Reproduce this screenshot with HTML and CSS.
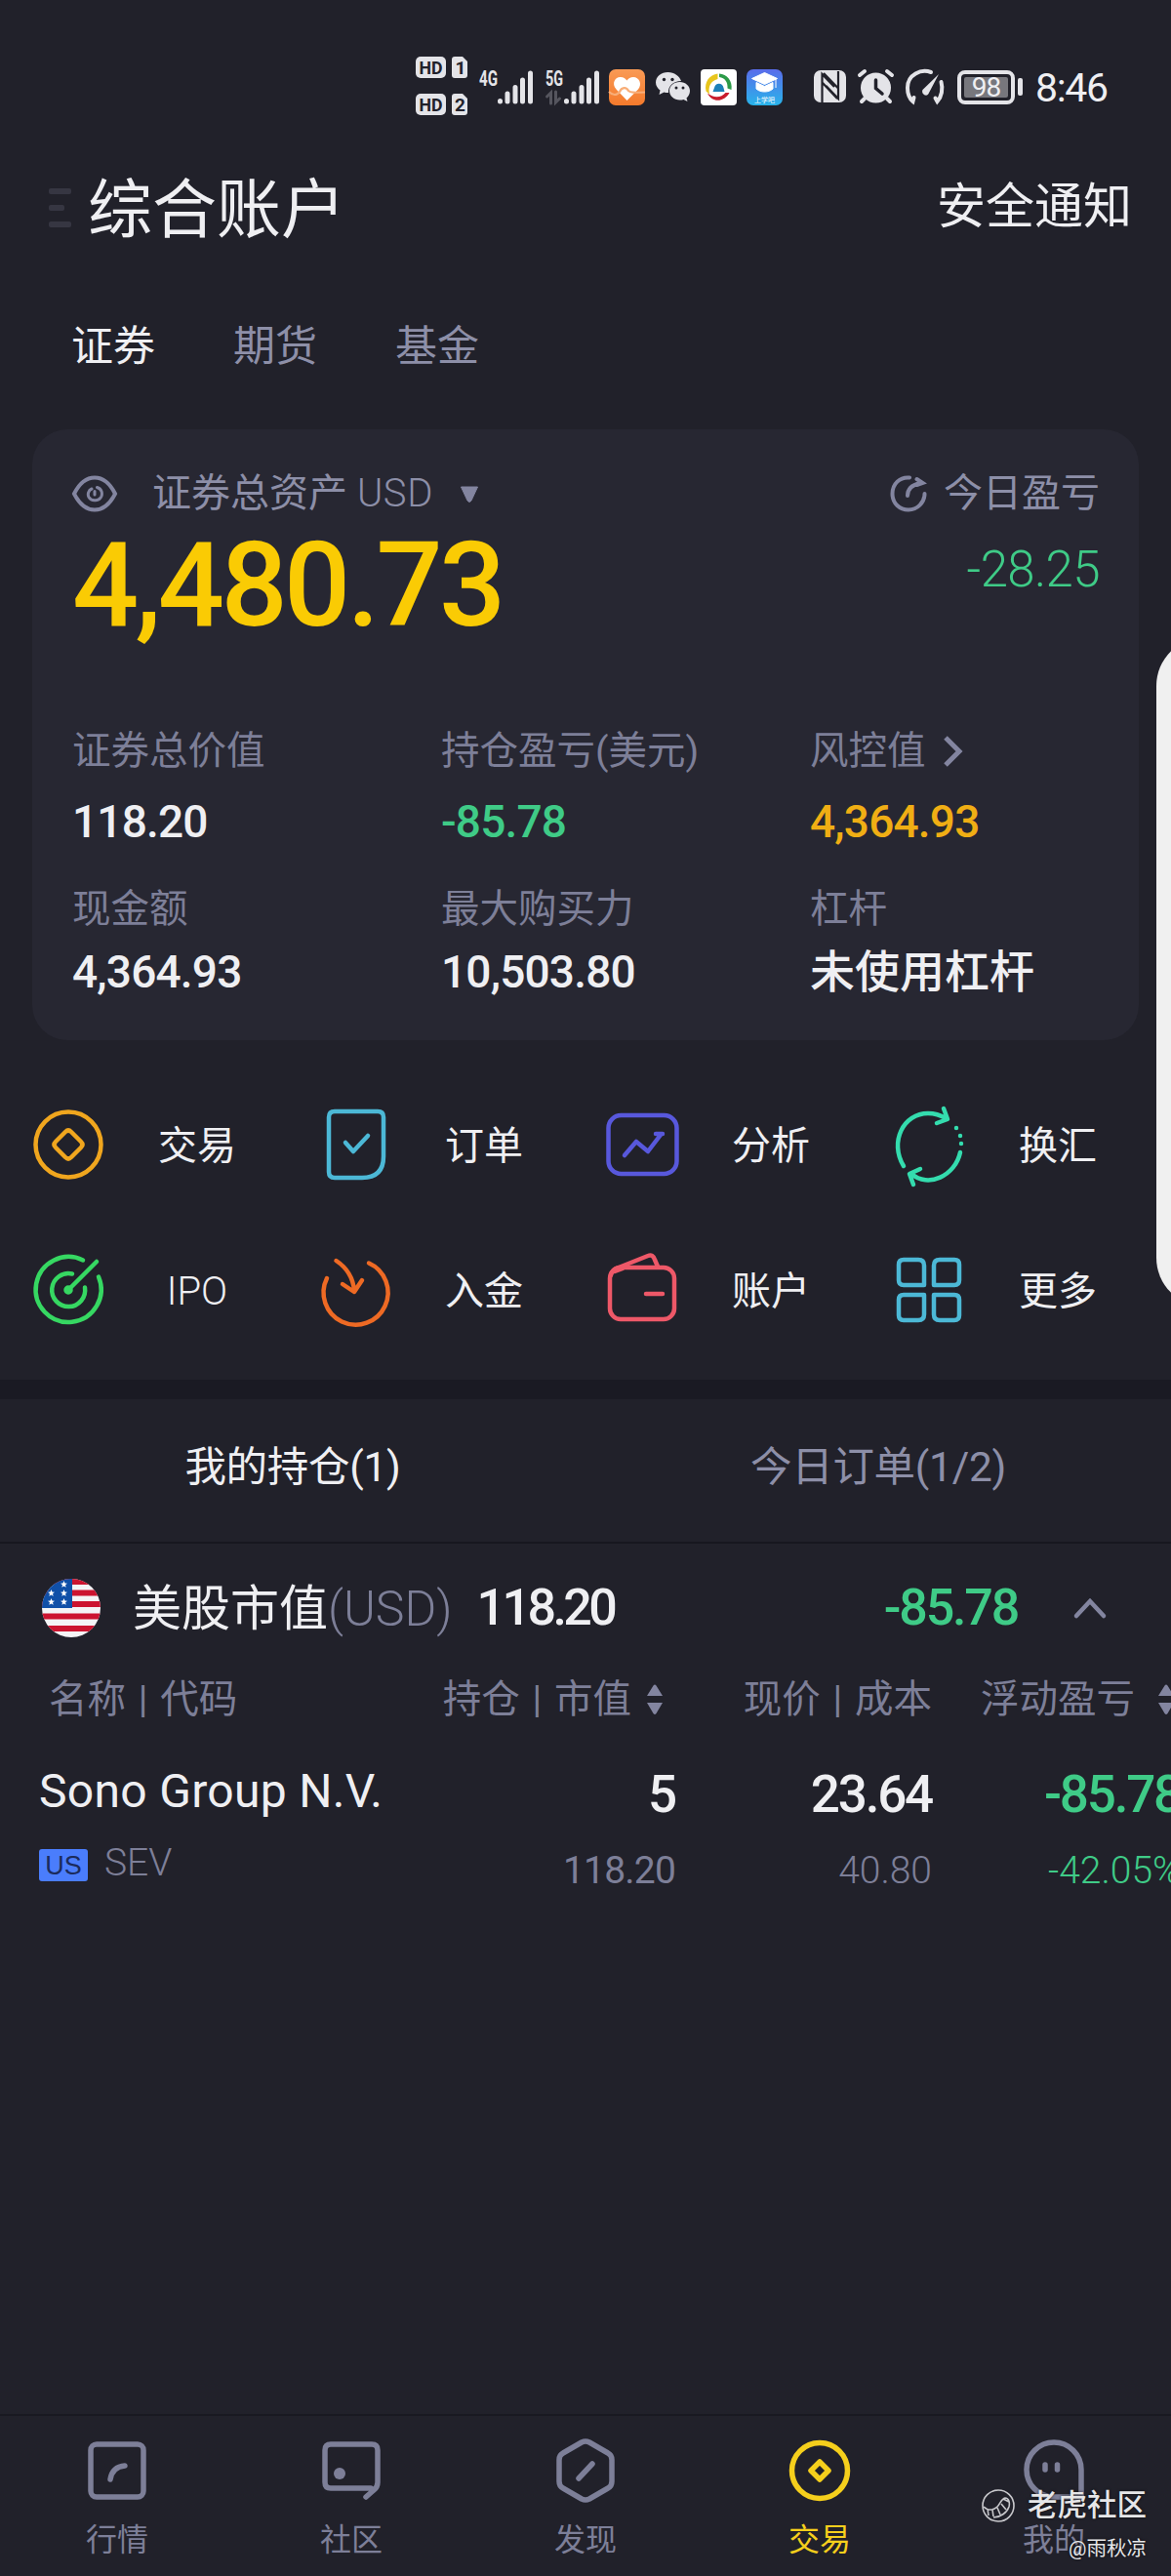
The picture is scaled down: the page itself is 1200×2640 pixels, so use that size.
FILE: index.html
```html
<!DOCTYPE html>
<html lang="zh-CN">
<head>
  <meta charset="UTF-8" />
  <meta name="viewport" content="width=device-width, initial-scale=1.0"/>
  <title>综合账户</title>
  <link rel="stylesheet" href="styles.css">
</head>
<body>
  <!-- Status bar -->
  <div class="status-bar">
    <svg class="st-hd" width="54" height="62" viewBox="0 0 54 62">
      <rect x="0" y="0" width="31" height="22" rx="5"/>
      <path d="M40 0h8l5 5v14a3 3 0 0 1-3 3h-10a3 3 0 0 1-3-3V3a3 3 0 0 1 3-3z"/>
      <rect x="0" y="38" width="31" height="22" rx="5"/>
      <path d="M40 38h8l5 5v14a3 3 0 0 1-3 3h-10a3 3 0 0 1-3-3V41a3 3 0 0 1 3-3z"/>
      <text x="3.500" y="17.500" textLength="24" lengthAdjust="spacingAndGlyphs">HD</text>
      <text x="40.500" y="18">1</text>
      <text x="3.500" y="55.500" textLength="24" lengthAdjust="spacingAndGlyphs">HD</text>
      <text x="40" y="56">2</text>
    </svg>
    <svg class="st-signal" width="56" height="38" viewBox="0 0 56 38">
      <text x="0" y="18" textLength="19" lengthAdjust="spacingAndGlyphs">4G</text>
      <path d="M21.500 33.500v.5M29 26v8M37 19.500v14.500M44.500 12v22M52.500 5v29"/>
    </svg>
    <svg class="st-signal" width="56" height="38" viewBox="0 0 56 38">
      <text x="0" y="18" textLength="18" lengthAdjust="spacingAndGlyphs">5G</text>
      <path class="dim" d="M1.500 29l4-4v11M14.500 31l-4 4V24"/>
      <path d="M21.500 33.500v.5M29 26v8M37 19.500v14.500M44.500 12v22M52.500 5v29"/>
    </svg>
    <svg class="st-heart" width="37" height="37" viewBox="0 0 37 37">
      <defs><linearGradient id="orange" x2="0" y2="1"><stop offset="0" stop-color="#f99a55"/><stop offset="1" stop-color="#f47a2c"/></linearGradient></defs>
      <rect width="37" height="37" rx="7" fill="url(#orange)"/>
      <path d="M18.500 32L7.500 20.500C2 14 7 7.500 12 8c3 .2 5 1.500 6.500 3.500C20 9.500 22 8 25 8c6 0 9.500 7 5 12.500z" fill="#fff"/>
      <path d="M0 23c4 4 8 4 11 0 2-5 7-5 9-1 2 2 5 2 17 1.500" fill="none" stroke="#f8ae78" stroke-width="2.200"/>
    </svg>
    <svg class="st-wechat" width="36" height="32" viewBox="0 0 36 32">
      <path d="M12.500 1C5.500 1 0 5.500 0 11.500c0 3.500 2 6 4.500 8L3.500 24l5-2.500c1.500.4 3 .6 4.500.5C12.500 15 18 10 26 10 24.500 5 19 1 12.500 1z" fill="#e4e4e8"/>
      <path d="M24.500 11C18.500 11 14 15 14 20c0 5.500 5 9.500 10.500 9.500 1.500 0 3-.2 4-.6l4 2-1-3.500c2-2 3.500-4 3.500-7.400 0-5-4.500-9-10.500-9z" fill="#e4e4e8"/>
      <g fill="#21212a"><circle cx="8.500" cy="8.500" r="1.700"/><circle cx="17" cy="8.500" r="1.700"/><circle cx="21" cy="17" r="1.500"/><circle cx="28" cy="17" r="1.500"/></g>
    </svg>
    <svg class="st-ring" width="37" height="37" viewBox="0 0 37 37">
      <rect width="37" height="37" rx="4" fill="#fff"/>
      <path d="M19 4.500C27 5 33 12 31.500 21l-4-1.500C28 13 25 9 19 8z" fill="#2c9a48"/>
      <path d="M17.500 4.500C9 5.500 3.500 13 5.500 22.500l3.500 3C7.500 18 10 12 17.500 10z" fill="#e8c51c"/>
      <path d="M29.500 24C25 33 12 35.500 7 24.500c6 5 14 5 18.500-.5z" fill="#c91c2c"/>
      <path d="M12.500 23l1.500-4a5 6 0 0 1 9.500 0l1 4z" fill="#1c80b8"/>
    </svg>
    <svg class="st-school" width="37" height="37" viewBox="0 0 37 37">
      <defs><linearGradient id="blue" x2="0" y2="1"><stop offset="0" stop-color="#5a6cea"/><stop offset="1" stop-color="#28b4ea"/></linearGradient></defs>
      <rect width="37" height="37" rx="7" fill="url(#blue)"/>
      <path d="M18.500 3.500l13 6-13 6-13-6zM10 13.500l8.500 4 8.500-4V20c-4 4-13 4-17 0zM30 10v9" fill="#fff" stroke="#fff"/>
      <text x="18.500" y="34" text-anchor="middle">上学吧</text>
    </svg>
    <svg class="st-nfc" width="34" height="34" viewBox="0 0 34 34">
      <rect x="0" y="0" width="33" height="33" rx="7" fill="#e4e4e8"/>
      <path d="M8.500 33V4L21 17M12.500 16L25 29V1M10 3l14.500 15M9 13l15 16" fill="none" stroke="#21212a" stroke-width="2.200"/>
    </svg>
    <svg class="st-alarm" width="38" height="36" viewBox="0 0 38 36">
      <circle cx="18.500" cy="19" r="15.500" fill="#e4e4e8"/>
      <path d="M2 6l5-4M35 6l-5-4M7 30l-3 3M30 30l3 3" stroke="#e4e4e8" stroke-width="4" stroke-linecap="round"/>
      <path d="M18.500 11v8.500l6.500 5.500" fill="none" stroke="#21212a" stroke-width="3.500" stroke-linecap="round"/>
    </svg>
    <svg class="st-gauge" width="40" height="36" viewBox="0 0 40 36">
      <g fill="none" stroke="#e4e4e8" stroke-width="4" stroke-linecap="round">
        <path d="M26 3C16-.5 2 5 2 19c0 5 2 11 5.500 14l1-4M36.500 13c2 7 .5 15-4 20l-2-3.500"/>
      </g>
      <path d="M34 5L23.500 25c-2 4-8 0-6-4z" fill="#e4e4e8"/>
    </svg>
    <div class="battery"><span>98</span></div>
    <div class="battery-tip"></div>
    <div class="clock">8:46</div>
  </div>

  <header class="header">
    <div class="menu-icon"><i></i><i class="short"></i><i></i></div>
    <h1>综合账户</h1>
    <a class="notice">安全通知</a>
  </header>

  <nav class="account-tabs">
    <a class="active">证券</a>
    <a>期货</a>
    <a>基金</a>
  </nav>

  <!-- Asset card -->
  <section class="asset-card">
    <div class="asset-top">
      <div>
        <div class="asset-label">
          <svg class="eye" width="46" height="38" viewBox="0 0 46 38" fill="none" stroke="#8385a0" stroke-width="4">
            <path d="M2 19C8 7 15 2.500 23 2.500S38 7 44 19C38 31 31 35.500 23 35.500S8 31 2 19z"/>
            <path d="M25.500 12.500c5 1.500 5.500 6 4.500 9-2 5-10 6-13 1-1.500-3-.5-7 3-8.500M23 20v-3.500" stroke-linecap="round" stroke-width="3"/>
          </svg>
          <span>证券总资产 <em>USD</em></span>
          <svg class="caret" width="20" height="17" viewBox="0 0 20 17"><path d="M1.500 1h17L12 15q-2 3-4 0z" fill="#8385a0" stroke="#8385a0" stroke-linejoin="round"/></svg>
        </div>
        <div class="asset-total">4,480.73</div>
      </div>
      <div class="asset-today">
        <div class="asset-label">
          <svg class="refresh" width="38" height="38" viewBox="0 0 38 38" fill="none" stroke="#8385a0" stroke-width="4" stroke-linecap="round">
            <path d="M20 2.500C10 1.500 2.500 9 2.500 19S10 35.500 19 35.500 35.500 28 35.500 19M18 21c0-6 4-11 13-13M27.500 4l6 4-6 2"/>
          </svg>
          <span>今日盈亏</span>
        </div>
        <div class="today-value">-28.25</div>
      </div>
    </div>
    <div class="asset-grid">
      <div class="cell"><label>证券总价值</label><b>118.20</b></div>
      <div class="cell"><label>持仓盈亏(美元)</label><b class="green">-85.78</b></div>
      <div class="cell">
        <label>风控值<svg class="more" width="22" height="34" viewBox="0 0 22 34"><path d="M3 3l14 14L3 31" fill="none" stroke="#8385a0" stroke-width="5"/></svg></label>
        <b class="orange">4,364.93</b>
      </div>
    </div>
    <div class="asset-grid second">
      <div class="cell"><label>现金额</label><b>4,364.93</b></div>
      <div class="cell"><label>最大购买力</label><b>10,503.80</b></div>
      <div class="cell"><label>杠杆</label><b class="cn">未使用杠杆</b></div>
    </div>
  </section>

  <!-- Shortcuts -->
  <section class="actions">
    <div class="action">
      <svg viewBox="0 0 76 78" stroke="#f0a61e">
        <circle cx="38" cy="39" r="33.500"/>
        <path d="M35 26q3-3 6 0l10 10q3 3 0 6L41 52q-3 3-6 0L25 42q-3-3 0-6z"/>
      </svg>
      <span>交易</span>
    </div>
    <div class="action">
      <svg viewBox="0 0 76 78" stroke="#4cb8d6">
        <path d="M17 5h44q6 0 6 6v40q0 22-22 22H17q-6 0-6-6V11q0-6 6-6z"/>
        <path d="M28 37l8 9 15-16"/>
      </svg>
      <span>订单</span>
    </div>
    <div class="action">
      <svg viewBox="0 0 76 78" stroke="#5858dc">
        <rect x="3.500" y="9" width="70" height="60" rx="13"/>
        <path d="M20 50l12-14 12 10 13-17M52 28h7"/>
      </svg>
      <span>分析</span>
    </div>
    <div class="action">
      <svg viewBox="0 0 76 78" stroke="#34dcae">
        <path d="M12 61C-3 36 12 7 37 7c7 0 13 2 18 5M53 2l4 11-11 4M70 47c-5 24-33 37-50 22M22 80l-4-11 11-5"/>
        <path d="M66 22v.1M70 30v.1M71 38v.1"/>
      </svg>
      <span>换汇</span>
    </div>
    <div class="action">
      <svg viewBox="0 0 76 78" stroke="#36d862">
        <path d="M53 8.500A33.500 33.500 0 1 0 69 25.500M42 22.500a17 17 0 1 0 13 14M38 39L67 10"/>
        <circle cx="38" cy="39" r="2.500"/>
      </svg>
      <span class="latin">IPO</span>
    </div>
    <div class="action">
      <svg viewBox="0 0 76 78" stroke="#ee6a24">
        <path d="M9 27A33 33 0 1 0 52 11.500M18.500 9C29 16 36 27 37 40M25 33l12 8 8-12"/>
      </svg>
      <span>入金</span>
    </div>
    <div class="action">
      <svg viewBox="0 0 76 78" stroke="#ee5868">
        <rect x="5" y="16" width="66" height="53" rx="11"/>
        <path d="M6 24q1-6 8-8L44 4q5-2 7 4l3 7M42 43h17M10 20l8-3"/>
      </svg>
      <span>账户</span>
    </div>
    <div class="action">
      <svg viewBox="0 0 76 78" stroke="#4cb8d6">
        <path d="M12 8h15q6 0 6 6v20H12q-5 0-5-5V13q0-5 5-5zM49 8h15q5 0 5 5v16q0 5-5 5H43V14q0-6 6-6zM12 44h21v20q0 6-6 6H12q-5 0-5-5V49q0-5 5-5zM43 44h21q5 0 5 5v16q0 5-5 5H49q-6 0-6-6z"/>
      </svg>
      <span>更多</span>
    </div>
  </section>

  <div class="band"></div>

  <nav class="position-tabs">
    <a class="active">我的持仓(1)</a>
    <a>今日订单(1/2)</a>
  </nav>

  <!-- Positions -->
  <section class="market">
    <svg class="flag" width="60" height="60" viewBox="0 0 60 60">
      <defs><clipPath id="round"><circle cx="30" cy="30" r="30"/></clipPath></defs>
      <g clip-path="url(#round)">
        <rect width="60" height="60" fill="#f4f4f6"/>
        <path d="M0 3h60M0 14.500h60M0 26h60M0 38.500h60M0 51h60" stroke="#cc1430" stroke-width="6"/>
        <rect width="31" height="30" fill="#1050a8"/>
        <path id="s" d="M9.500 11l1 2.500 2.500.2-2 1.600.7 2.500-2.200-1.400-2.200 1.400.7-2.500-2-1.600 2.500-.2z" fill="#fff"/>
        <use href="#s" y="9"/><use href="#s" x="13" y="9"/><use href="#s" x="13"/><use href="#s" x="13" y="-9"/>
      </g>
    </svg>
    <span class="market-name">美股市值<em>(USD)</em></span>
    <b class="market-value">118.20</b>
    <b class="market-pnl">-85.78</b>
    <svg class="fold" width="34" height="22" viewBox="0 0 34 22"><path d="M3 19L17 4l14 15" fill="none" stroke="#8385a0" stroke-width="4.500" stroke-linecap="round"/></svg>
  </section>

  <section class="table">
    <div class="row head">
      <div>名称 | 代码</div>
      <div>持仓 | 市值<svg class="sort" width="18" height="32" viewBox="0 0 18 32"><path d="M1 12L7.500 1.500q1.500-2 3 0L17 12zM1 19h16l-6.500 11q-1.500 2-3 0z"/></svg></div>
      <div>现价 | 成本</div>
      <div>浮动盈亏<svg class="sort" width="18" height="32" viewBox="0 0 18 32"><path d="M1 12L7.500 1.500q1.500-2 3 0L17 12zM1 19h16l-6.500 11q-1.500 2-3 0z"/></svg></div>
    </div>
    <div class="row main">
      <div class="name">Sono Group N.V.</div>
      <div>5</div>
      <div>23.64</div>
      <div class="green">-85.78</div>
    </div>
    <div class="row sub">
      <div class="code"><i>US</i>SEV</div>
      <div class="bold">118.20</div>
      <div>40.80</div>
      <div class="green">-42.05%</div>
    </div>
  </section>

  <!-- Bottom navigation -->
  <footer class="tabbar">
    <a>
      <svg viewBox="0 0 70 70"><rect x="8" y="8" width="54" height="54" rx="6"/><path d="M28 44q2-13 15-14"/></svg>
      行情
    </a>
    <a>
      <svg viewBox="0 0 70 70"><path d="M55 53H14q-6 0-6-6V14q0-6 6-6h42q6 0 6 6v33q0 5-4 8l-8 7"/><circle class="dot" cx="23" cy="38" r="6"/></svg>
      社区
    </a>
    <a>
      <svg viewBox="0 0 70 70"><path d="M31 6q4-2 8 0l19 11q4 2 4 7v22q0 5-4 7L39 64q-4 2-8 0L12 53q-4-2-4-7V24q0-5 4-7zM28 43l14-15"/></svg>
      发现
    </a>
    <a class="active">
      <svg viewBox="0 0 70 70"><circle cx="35" cy="35" r="28.500"/><path d="M35 26l9 9-9 9-9-9z"/></svg>
      交易
    </a>
    <a>
      <svg viewBox="0 0 70 70"><path d="M35 62A28 28 0 1 1 63 34v28z"/><path d="M26 29v5M38.500 29v5"/></svg>
      我的
    </a>
  </footer>

  <div class="edge-panel"></div>

  <div class="watermark">
    <div class="brand">
      <svg width="36" height="36" viewBox="0 0 36 36" fill="none" stroke="#c8c8cc" stroke-width="1.600">
        <circle cx="18" cy="18" r="16"/>
        <path d="M3 19c4 4 10 4 14 0 3-3 4-8 8-9 4 0 5 5 4 9-2 6-9 11-16 11M7 21l1 7M12 22l1 7M17 20l3 7M21 16l5 6M23 11l6 3"/>
      </svg>
      老虎社区
    </div>
    <div class="author">@雨秋凉</div>
  </div>
</body>
</html>
```

FILE: styles.css
```css
:root {
  --bg-color: #21212a;
  --card-bg: #272732;
  --band-color: #1a1a23;
  --text-color: #efeff2;
  --muted: #7d7f98;
  --label: #8d8fa8;
  --green: #3fcb87;
  --yellow: #facb04;
}

* {
  box-sizing: border-box;
}

body {
  margin: 0;
  width: 1200px;
  height: 2640px;
  position: relative;
  overflow: hidden;
  display: flex;
  flex-direction: column;
  font-family: Roboto, 'Noto Sans CJK SC', sans-serif;
  font-size: 40px;
  background-color: var(--bg-color);
  color: var(--text-color);
}

svg {
  display: block;
  flex-shrink: 0;
  overflow: visible;
}

em {
  font-style: normal;
  font-weight: 300;
}

.green {
  color: var(--green);
}

.orange {
  color: #f0ae14;
}

/* status bar */
.status-bar {
  height: 178px;
  padding-left: 426px;
  display: flex;
  align-items: center;
}

.st-hd {
  fill: #e4e4e8;
  margin-right: 11px;
}

.st-hd text {
  fill: var(--bg-color);
  font-size: 19px;
  font-weight: 700;
}

.st-signal {
  margin-right: 12px;
}

.st-signal text {
  fill: #e4e4e8;
  font-size: 22px;
  font-weight: 700;
}

.st-signal path {
  stroke: #e4e4e8;
  stroke-width: 5;
  stroke-linecap: round;
  fill: none;
}

.st-signal .dim {
  stroke: #55555e;
  stroke-width: 3;
}

.st-heart {
  margin-right: 11px;
  margin-left: -3px;
}

.st-wechat {
  margin-right: 10px;
}

.st-ring {
  margin-right: 10px;
}

.st-school {
  margin-right: 32px;
}

.st-school text {
  fill: #fff;
  font-size: 7px;
}

.st-nfc {
  margin-right: 11px;
}

.st-alarm {
  margin-right: 11px;
}

.st-gauge {
  margin-right: 13px;
}

.battery {
  width: 59px;
  height: 35px;
  padding: 3px;
  border: 4px solid #e4e4e8;
  border-radius: 8px;
}

.battery span {
  display: block;
  height: 21px;
  background-color: #77777d;
  border-radius: 2px;
  font-size: 28px;
  line-height: 22px;
  text-align: center;
  letter-spacing: -1px;
}

.battery-tip {
  width: 5px;
  height: 18px;
  margin: 0 13px 0 3px;
  background-color: #e4e4e8;
  border-radius: 2px;
}

.clock {
  font-size: 41px;
  line-height: 44px;
  letter-spacing: -1.3px;
  padding-top: 2px;
}

/* header */
.header {
  height: 70px;
  padding: 0 40px 0 50px;
  display: flex;
  align-items: center;
}

.menu-icon {
  width: 40px;
  display: flex;
  flex-direction: column;
  gap: 11px;
}

.menu-icon i {
  width: 23px;
  height: 6px;
  border-radius: 2px;
  background-color: #363642;
}

.menu-icon .short {
  width: 16px;
}

.header h1 {
  margin: 5px 0 0;
  font-size: 66px;
  line-height: 70px;
  font-weight: 400;
}

.notice {
  margin-left: auto;
  font-size: 50px;
  line-height: 70px;
  padding-bottom: 3px;
}

.account-tabs {
  height: 70px;
  margin-top: 71px;
  padding-left: 73px;
  display: flex;
  gap: 80px;
  font-size: 43px;
  line-height: 72px;
  color: var(--label);
}

.account-tabs .active {
  color: var(--text-color);
}

/* asset card */
.asset-card {
  height: 626px;
  margin: 51px 33px 0;
  padding: 46px 40px 0 41px;
  border-radius: 36px;
  background-color: var(--card-bg);
}

.asset-top {
  display: flex;
  justify-content: space-between;
}

.asset-label {
  height: 40px;
  display: flex;
  align-items: center;
  line-height: 40px;
  color: var(--label);
}

.asset-label em {
  letter-spacing: 0.6px;
}

.eye {
  margin-right: 36px;
}

.caret {
  margin-left: 27px;
}

.refresh {
  margin-right: 17px;
}

.asset-total {
  margin-top: 14px;
  font-size: 120px;
  line-height: 120px;
  font-weight: 500;
  letter-spacing: -3.6px;
  color: var(--yellow);
}

.today-value {
  margin-top: 33px;
  font-size: 51px;
  line-height: 50px;
  font-weight: 300;
  letter-spacing: -0.6px;
  text-align: right;
  color: var(--green);
}

.asset-grid {
  display: grid;
  grid-template-columns: 378px 378px 1fr;
  margin-top: 90px;
}

.asset-grid.second {
  margin-top: 46px;
}

.cell label {
  height: 40px;
  display: flex;
  align-items: center;
  font-size: 39.5px;
  line-height: 40px;
  color: var(--muted);
}

.cell b {
  display: block;
  margin-top: 29px;
  font-size: 46px;
  line-height: 47px;
  font-weight: 500;
  letter-spacing: -0.8px;
}

.second b {
  margin-top: 21px;
}

.cell .cn {
  letter-spacing: 0;
}

.more {
  margin-left: 17px;
}

/* shortcuts */
.actions {
  display: grid;
  grid-template-columns: repeat(4, 294px);
  row-gap: 71px;
  padding: 68px 0 0 32px;
}

.action {
  height: 78px;
  display: flex;
  align-items: center;
}

.action svg {
  width: 76px;
  height: 78px;
  margin-right: 54px;
  fill: none;
  stroke-width: 4.5;
  stroke-linecap: round;
  stroke-linejoin: round;
}

.action span {
  width: 80px;
  line-height: 44px;
  padding-top: 3px;
  text-align: center;
}

.action .latin {
  font-weight: 300;
}

.band {
  height: 20px;
  margin-top: 53px;
  background-color: var(--band-color);
}

.position-tabs {
  height: 148px;
  display: flex;
  border-bottom: 2px solid #17171f;
  font-size: 42.500px;
  line-height: 140px;
  color: var(--label);
}

.position-tabs a {
  flex: 1;
  text-align: center;
  letter-spacing: -0.3px;
}

.position-tabs .active {
  color: var(--text-color);
}

/* positions */
.market {
  height: 60px;
  margin-top: 36px;
  padding: 0 66px 0 43px;
  display: flex;
  align-items: center;
  font-size: 50px;
  line-height: 60px;
}

.market-name {
  margin: 2px 25px 0 33px;
}

.market-name em {
  color: var(--muted);
}

.market-value,
.market-pnl {
  font-size: 52px;
  font-weight: 500;
  letter-spacing: -3.600px;
}

.market-pnl {
  margin-left: auto;
  letter-spacing: -2.200px;
  color: var(--green);
}

.fold {
  margin-left: 57px;
}

.table {
  margin-top: 44px;
}

.row {
  display: grid;
  grid-template-columns: 380px 272px 263px 245px;
  padding-left: 40px;
  align-items: center;
  text-align: right;
  white-space: nowrap;
}

.row > :first-child {
  text-align: left;
}

.head {
  height: 40px;
  line-height: 40px;
  font-size: 39.500px;
  word-spacing: 3px;
  color: var(--muted);
}

.head > :first-child {
  padding-left: 10px;
}

.head > :nth-child(2) {
  display: flex;
  align-items: center;
  justify-content: flex-end;
  padding-right: 12px;
}

.head > :nth-child(4) {
  display: flex;
  align-items: center;
  padding-left: 50px;
}

.sort {
  margin-left: 15px;
  fill: #8385a0;
}

.head > :nth-child(4) .sort {
  margin-left: 23px;
}

.main {
  height: 50px;
  margin-top: 49px;
  font-size: 53px;
  line-height: 50px;
  font-weight: 500;
  letter-spacing: -2.200px;
}

.main .name {
  padding-bottom: 5px;
  font-size: 48px;
  font-weight: 400;
  letter-spacing: 0.3px;
}

.main .green,
.sub .green {
  text-align: left;
  padding-left: 115px;
}

.sub {
  height: 40px;
  margin-top: 28px;
  font-size: 39px;
  line-height: 40px;
  font-weight: 300;
  color: var(--muted);
}

.sub .bold {
  font-weight: 400;
  letter-spacing: -0.8px;
}

.sub .green {
  padding-left: 119px;
}

.code {
  display: flex;
  align-items: center;
  padding-bottom: 16px;
}

.code i {
  width: 50px;
  height: 33px;
  margin: 5px 17px 0 0;
  border-radius: 3px;
  background-color: #4a7dfc;
  font: 27px/34px 'Liberation Sans', sans-serif;
  text-align: center;
  color: #1b2b5c;
}

/* bottom navigation */
.tabbar {
  height: 166px;
  margin-top: auto;
  padding-top: 21px;
  display: flex;
  border-top: 2px solid #191921;
  font-size: 32px;
  line-height: 36px;
  color: var(--muted);
}

.tabbar a {
  flex: 1;
  display: flex;
  flex-direction: column;
  align-items: center;
}

.tabbar svg {
  width: 70px;
  height: 70px;
  margin-bottom: 18px;
  fill: none;
  stroke: currentColor;
  stroke-width: 5.5;
  stroke-linecap: round;
  stroke-linejoin: round;
}

.tabbar .dot {
  fill: currentColor;
  stroke: none;
}

.tabbar .active {
  color: #f5cf1c;
}

/* floating layers */
.edge-panel {
  position: absolute;
  left: 1185px;
  top: 653px;
  width: 15px;
  height: 686px;
  overflow: hidden;
}

.edge-panel::before {
  content: '';
  display: block;
  width: 100px;
  height: 686px;
  border-radius: 50px;
  background-color: #f0f0f0;
}

.watermark {
  position: absolute;
  right: 25px;
  bottom: 15px;
  text-align: right;
  color: #e6e6e8;
  text-shadow: 0 0 3px rgba(0, 0, 0, 0.7);
}

.brand {
  display: flex;
  align-items: center;
  gap: 12px;
  font-size: 30.500px;
  line-height: 36px;
  font-weight: 500;
}

.author {
  margin-top: 13px;
  font-size: 20.500px;
  line-height: 26px;
}
```
